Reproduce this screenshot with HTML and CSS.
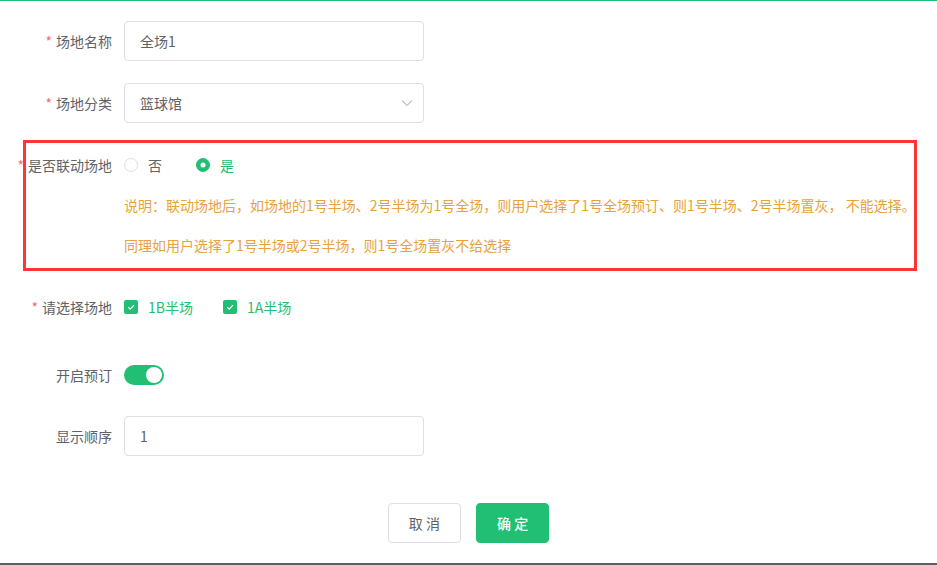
FILE: index.html
```html
<!DOCTYPE html>
<html lang="zh-CN">
  <head>
    <meta charset="UTF-8" />
    <meta name="viewport" content="width=device-width, initial-scale=1.0" />
    <title>场地编辑</title>
    <link rel="stylesheet" href="styles.css">
  </head>
  <body>
    <div class="page">
      <form class="form">
        <div class="form-item">
          <label class="form-label is-required">场地名称</label>
          <div class="form-content">
            <input class="input" type="text" value="全场1" />
          </div>
        </div>

        <div class="form-item">
          <label class="form-label is-required">场地分类</label>
          <div class="form-content">
            <div class="select">
              <input class="input" type="text" value="篮球馆" readonly />
              <svg class="select-arrow" width="12" height="8" viewBox="0 0 12 8">
                <path d="M1 1.5l5 5 5-5" fill="none" stroke="#c0c4cc" stroke-width="1.2" />
              </svg>
            </div>
          </div>
        </div>

        <div class="form-item no-gap">
          <label class="form-label is-required">是否联动场地</label>
          <div class="form-content">
            <label class="radio">
              <span class="radio-input"></span>
              <span class="radio-label">否</span>
            </label>
            <label class="radio is-checked">
              <span class="radio-input"></span>
              <span class="radio-label">是</span>
            </label>
          </div>
        </div>

        <div class="tips">
          <p>说明：联动场地后，如场地的1号半场、2号半场为1号全场，则用户选择了1号全场预订、则1号半场、2号半场置灰， 不能选择。</p>
          <p>同理如用户选择了1号半场或2号半场，则1号全场置灰不给选择</p>
        </div>

        <div class="form-item item-checks">
          <label class="form-label is-required">请选择场地</label>
          <div class="form-content">
            <label class="checkbox">
              <span class="checkbox-input">
                <svg width="10" height="10" viewBox="0 0 10 10">
                  <path d="M2.2 5.1l2 2 3.8-4" fill="none" stroke="#fff" stroke-width="1.3" />
                </svg>
              </span>
              <span class="checkbox-label">1B半场</span>
            </label>
            <label class="checkbox">
              <span class="checkbox-input">
                <svg width="10" height="10" viewBox="0 0 10 10">
                  <path d="M2.2 5.1l2 2 3.8-4" fill="none" stroke="#fff" stroke-width="1.3" />
                </svg>
              </span>
              <span class="checkbox-label">1A半场</span>
            </label>
          </div>
        </div>

        <div class="form-item item-switch">
          <label class="form-label">开启预订</label>
          <div class="form-content">
            <span class="switch is-on"><span class="switch-core"></span></span>
          </div>
        </div>

        <div class="form-item">
          <label class="form-label">显示顺序</label>
          <div class="form-content">
            <input class="input" type="text" value="1" />
          </div>
        </div>

        <div class="form-footer">
          <button type="button" class="btn">取 消</button>
          <button type="button" class="btn btn-primary">确 定</button>
        </div>
      </form>

      <!-- annotation box drawn over the linked-venue block -->
      <div class="mark-box"></div>
    </div>
  </body>
</html>
```

FILE: styles.css
```css
* {
  margin: 0;
  padding: 0;
  box-sizing: border-box;
}

body {
  font-family: "Noto Sans CJK SC", "Noto Sans", sans-serif;
  font-size: 14px;
  color: #606266;
  background-color: #fff;
}

.page {
  position: relative;
  height: 565px;
  border-top: 1px solid #21bf73;
  border-bottom: 2px solid #5f5f5f;
  padding-top: 20px;
}

.form-item {
  display: flex;
  margin-bottom: 22px;
}

.form-item.no-gap {
  margin-bottom: 0;
}

.form-item.item-checks {
  margin-bottom: 28px;
}

.form-item.item-switch {
  margin-bottom: 21px;
}

.form-label {
  width: 124px;
  flex-shrink: 0;
  display: flex;
  justify-content: flex-end;
  padding-right: 12px;
  line-height: 40px;
  white-space: nowrap;
  color: #606266;
}

.form-label.is-required::before {
  content: "*";
  color: #f56c6c;
  margin-right: 4px;
}

.form-content {
  display: flex;
  align-items: center;
  min-height: 40px;
}

.input {
  width: 300px;
  height: 40px;
  padding: 0 15px;
  border: 1px solid #dcdfe6;
  border-radius: 4px;
  font-family: inherit;
  font-size: 14px;
  color: #606266;
  outline: none;
  background: #fff;
}

.select {
  position: relative;
}

.select-arrow {
  position: absolute;
  right: 11px;
  top: 16px;
}

.radio {
  display: inline-flex;
  align-items: center;
  margin-right: 34px;
  cursor: pointer;
}

.radio-input {
  width: 14px;
  height: 14px;
  border: 1px solid #dcdfe6;
  border-radius: 50%;
  background: #fff;
  position: relative;
}

.radio-label {
  padding-left: 10px;
}

.radio.is-checked .radio-input {
  background: #21bf73;
  border-color: #21bf73;
}

.radio.is-checked .radio-input::after {
  content: "";
  position: absolute;
  width: 5px;
  height: 5px;
  border-radius: 50%;
  background: #fff;
  left: 50%;
  top: 50%;
  transform: translate(-50%, -50%);
}

.radio.is-checked .radio-label {
  color: #21bf73;
}

.tips {
  padding-left: 124px;
  color: #e6a23c;
  line-height: 40px;
  margin-bottom: 22px;
}

.tips p {
  white-space: nowrap;
}

.checkbox {
  display: inline-flex;
  align-items: center;
  margin-right: 30px;
  cursor: pointer;
}

.checkbox-input {
  width: 14px;
  height: 14px;
  border-radius: 2px;
  background: #21bf73;
  display: flex;
  justify-content: center;
  align-items: center;
}

.checkbox-label {
  padding-left: 10px;
  color: #21bf73;
}

.switch {
  display: inline-block;
  width: 40px;
  height: 20px;
  border-radius: 10px;
  background: #dcdfe6;
  position: relative;
}

.switch.is-on {
  background: #21bf73;
}

.switch-core {
  position: absolute;
  top: 2px;
  left: 2px;
  width: 16px;
  height: 16px;
  border-radius: 50%;
  background: #fff;
}

.switch.is-on .switch-core {
  left: 22px;
}

.form-footer {
  display: flex;
  justify-content: center;
  gap: 15px;
  margin-top: 47px;
}

.btn {
  height: 40px;
  padding: 0 20px;
  border: 1px solid #dcdfe6;
  border-radius: 4px;
  background: #fff;
  font-family: inherit;
  font-size: 14px;
  color: #606266;
  cursor: pointer;
  white-space: nowrap;
}

.btn-primary {
  background: #21bf73;
  border-color: #21bf73;
  color: #fff;
  font-weight: 500;
}

.mark-box {
  position: absolute;
  left: 23px;
  top: 139px;
  width: 894px;
  height: 131px;
  border: 3px solid #ff3535;
  pointer-events: none;
}
```
